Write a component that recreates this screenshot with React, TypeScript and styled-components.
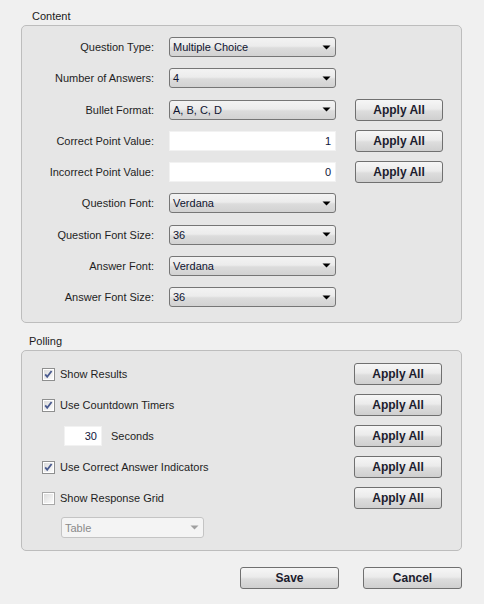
import React from 'react'
import styled, { createGlobalStyle } from 'styled-components'

const GlobalStyle = createGlobalStyle`
  html, body {
    margin: 0;
    padding: 0;
    background: #f0f0f0;
  }
  body {
    font-family: 'Liberation Sans', Arial, sans-serif;
    font-size: 11px;
    color: #1e1e1e;
  }
`

const Page = styled.div`
  width: 484px;
  box-sizing: border-box;
  padding: 9px 22px 0 21px;
`

const GroupTitle = styled.div<{ indent: number; top?: number }>`
  height: 14px;
  line-height: 14px;
  padding-left: ${({ indent }) => indent}px;
  margin-top: ${({ top }) => top ?? 0}px;
  margin-bottom: 2px;
  color: #1a1a1a;
`

const GroupBox = styled.div<{ pad: string }>`
  border: 1px solid #bdbdbd;
  border-radius: 5px;
  background: #e6e6e6;
  padding: ${({ pad }) => pad};
`

const FormGrid = styled.div`
  display: grid;
  grid-template-columns: 147px 186px 88px;
  grid-auto-rows: 22px;
  row-gap: 9.25px;
  align-items: center;
`

const Label = styled.div`
  text-align: right;
  padding-right: 15px;
`

const SelectBox = styled.div<{ w?: number; h?: number; disabled?: boolean }>`
  width: ${({ w }) => w ?? 167}px;
  height: ${({ h }) => h ?? 20}px;
  box-sizing: border-box;
  border: 1px solid ${({ disabled }) => (disabled ? '#c4c4c4' : '#767676')};
  border-radius: 3px;
  background: ${({ disabled }) =>
    disabled
      ? '#f4f4f4'
      : 'linear-gradient(to bottom, #f3f3f3 0%, #ececec 45%, #dcdcdc 55%, #d2d2d2 100%)'};
  display: flex;
  align-items: center;
  justify-content: space-between;
  padding: 0 4px 0 3px;
  color: ${({ disabled }) => (disabled ? '#8a8a8a' : '#0f1430')};
`

const TextBox = styled.div<{ w?: number }>`
  width: ${({ w }) => w ?? 167}px;
  height: 20px;
  box-sizing: border-box;
  background: #fff;
  border: 1px solid #f2f2f2;
  display: flex;
  align-items: center;
  justify-content: flex-end;
  padding-right: 4px;
  color: #10163a;
`

const Button = styled.button<{ w?: number }>`
  width: ${({ w }) => w ?? 88}px;
  height: 22px;
  box-sizing: border-box;
  border: 1px solid #707070;
  border-radius: 3px;
  background: linear-gradient(to bottom, #f6f6f6 0%, #ebebeb 45%, #dddddd 55%, #cfcfcf 100%);
  font-family: 'Liberation Sans', Arial, sans-serif;
  font-size: 12px;
  font-weight: bold;
  color: #1c1c2e;
  padding: 0;
  cursor: pointer;
`

const PollList = styled.div`
  display: flex;
  flex-direction: column;
  gap: 9px;
`

const PollRow = styled.div<{ indent?: number }>`
  height: 22px;
  display: flex;
  align-items: center;
  justify-content: space-between;
  padding-left: ${({ indent }) => indent ?? 0}px;
`

const Left = styled.div<{ gap: number }>`
  display: flex;
  align-items: center;
  gap: ${({ gap }) => gap}px;
`

const TableRow = styled.div`
  padding-left: 19px;
  margin-top: -1px;
`

const Footer = styled.div`
  display: flex;
  justify-content: flex-end;
  gap: 24px;
  margin-top: 16px;
`

const Arrow = ({ color = '#000' }: { color?: string }) => (
  <svg width="9" height="5" viewBox="0 0 9 5">
    <path d="M0.5 0.5 H8.5 L4.5 4.5 Z" fill={color} />
  </svg>
)

const Check = ({ checked }: { checked: boolean }) => (
  <svg width="13" height="13" viewBox="0 0 13 13">
    <defs>
      <linearGradient id={checked ? 'cbOn' : 'cbOff'} x1="0" y1="0" x2="1" y2="1">
        <stop offset="0" stopColor="#dcdcdc" />
        <stop offset="1" stopColor="#fbfbfb" />
      </linearGradient>
    </defs>
    <rect x="0.5" y="0.5" width="12" height="12" fill="#fff" stroke={checked ? '#8e8f8f' : '#a9a9a9'} />
    <rect x="2" y="2" width="9" height="9" fill={`url(#${checked ? 'cbOn' : 'cbOff'})`} />
    {checked && (
      <path d="M3.2 6.4 L5.2 8.8 L9.6 3" fill="none" stroke="#4a5b8f" strokeWidth="1.8" />
    )}
  </svg>
)

const Select = ({ value }: { value: string }) => (
  <SelectBox>
    <span>{value}</span>
    <Arrow />
  </SelectBox>
)

const contentRows: { label: string; kind: 'select' | 'text'; value: string; apply?: boolean }[] = [
  { label: 'Question Type:', kind: 'select', value: 'Multiple Choice' },
  { label: 'Number of Answers:', kind: 'select', value: '4' },
  { label: 'Bullet Format:', kind: 'select', value: 'A, B, C, D', apply: true },
  { label: 'Correct Point Value:', kind: 'text', value: '1', apply: true },
  { label: 'Incorrect Point Value:', kind: 'text', value: '0', apply: true },
  { label: 'Question Font:', kind: 'select', value: 'Verdana' },
  { label: 'Question Font Size:', kind: 'select', value: '36' },
  { label: 'Answer Font:', kind: 'select', value: 'Verdana' },
  { label: 'Answer Font Size:', kind: 'select', value: '36' },
]

export default function App() {
  return (
    <Page>
      <GlobalStyle />
      <GroupTitle indent={11}>Content</GroupTitle>
      <GroupBox pad="10px 0 14px 0">
        <FormGrid>
          {contentRows.map((r) => (
            <React.Fragment key={r.label}>
              <Label>{r.label}</Label>
              {r.kind === 'select' ? <Select value={r.value} /> : <TextBox>{r.value}</TextBox>}
              {r.apply ? <Button>Apply All</Button> : <span />}
            </React.Fragment>
          ))}
        </FormGrid>
      </GroupBox>

      <GroupTitle indent={8} top={11}>Polling</GroupTitle>
      <GroupBox pad="12px 19px 12px 20px">
        <PollList>
          <PollRow>
            <Left gap={5}>
              <Check checked />
              <span>Show Results</span>
            </Left>
            <Button>Apply All</Button>
          </PollRow>
          <PollRow>
            <Left gap={5}>
              <Check checked />
              <span>Use Countdown Timers</span>
            </Left>
            <Button>Apply All</Button>
          </PollRow>
          <PollRow indent={22}>
            <Left gap={9}>
              <TextBox w={38}>30</TextBox>
              <span>Seconds</span>
            </Left>
            <Button>Apply All</Button>
          </PollRow>
          <PollRow>
            <Left gap={5}>
              <Check checked />
              <span>Use Correct Answer Indicators</span>
            </Left>
            <Button>Apply All</Button>
          </PollRow>
          <PollRow>
            <Left gap={5}>
              <Check checked={false} />
              <span>Show Response Grid</span>
            </Left>
            <Button>Apply All</Button>
          </PollRow>
          <TableRow>
            <SelectBox w={143} h={21} disabled>
              <span>Table</span>
              <Arrow color="#a0a0a0" />
            </SelectBox>
          </TableRow>
        </PollList>
      </GroupBox>

      <Footer>
        <Button w={99}>Save</Button>
        <Button w={99}>Cancel</Button>
      </Footer>
    </Page>
  )
}
